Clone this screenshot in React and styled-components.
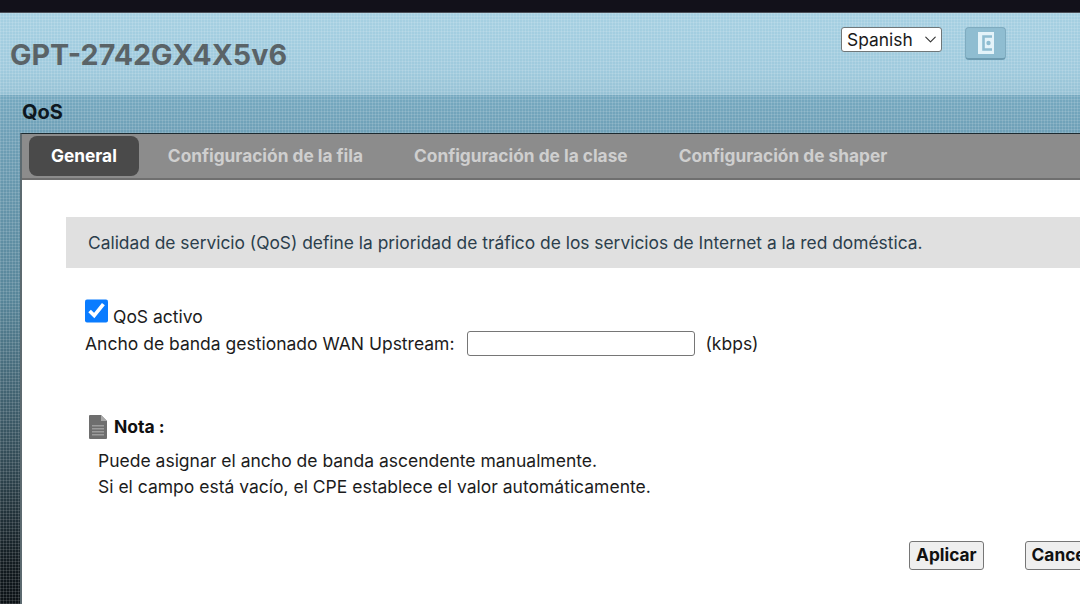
import React from "react";
import styled, { createGlobalStyle } from "styled-components";
import { ChevronDown } from "lucide-react";

const GlobalStyle = createGlobalStyle`
  html, body {
    margin: 0;
    padding: 0;
    background: #0b1115;
  }
  body {
    font-family: Inter, "Noto Sans", sans-serif;
  }
`;

function ExitIcon() {
  return (
    <svg width="16" height="22" viewBox="0 0 16 22">
      <path d="M0 0h16v22H0z" fill="#e4f3f9" />
      <path d="M14 4.5H5.5v13H14" fill="none" stroke="#8fbdd1" strokeWidth="2.6" />
      <circle cx="10.5" cy="11" r="2.2" fill="#8fbdd1" />
    </svg>
  );
}

function NoteIcon() {
  return (
    <svg width="18" height="24" viewBox="0 0 18 24">
      <path d="M1 0h11l6 6v17a1 1 0 0 1-1 1H1a1 1 0 0 1-1-1V1a1 1 0 0 1 1-1z" fill="#6e6e6e" />
      <path d="M12 0l6 6h-6z" fill="#a8a8a8" />
      <path d="M3 10h12v1.4H3zM3 13h12v1.4H3zM3 16h12v1.4H3zM3 19h12v1.4H3z" fill="#9c9c9c" />
    </svg>
  );
}

export default function App() {
  return (
    <>
      <GlobalStyle />
      <Page>
        <TopBar />
        <Header>
          <Title>GPT-2742GX4X5v6</Title>
          <HeaderTools>
            <SelectWrap>
              <LangSelect defaultValue="es">
                <option value="es">Spanish</option>
              </LangSelect>
              <SelectArrow>
                <ChevronDown size={19} strokeWidth={1.4} />
              </SelectArrow>
            </SelectWrap>
            <ExitButton>
              <ExitIcon />
            </ExitButton>
          </HeaderTools>
        </Header>
        <Section>
          <Heading>QoS</Heading>
          <Panel>
            <TabBar>
              <Tab $active>General</Tab>
              <Tab>Configuración de la fila</Tab>
              <Tab>Configuración de la clase</Tab>
              <Tab>Configuración de shaper</Tab>
            </TabBar>
            <Body>
              <InfoBox>
                Calidad de servicio (QoS) define la prioridad de tráfico de los servicios de Internet a la red doméstica.
              </InfoBox>
              <Form>
                <CheckRow>
                  <Check type="checkbox" defaultChecked />
                  <CheckLabel>QoS activo</CheckLabel>
                </CheckRow>
                <FieldRow>
                  <span>Ancho de banda gestionado WAN Upstream:</span>
                  <Field type="text" />
                  <span>(kbps)</span>
                </FieldRow>
              </Form>
              <Note>
                <NoteHead>
                  <NoteIcon />
                  <NoteTitle>Nota :</NoteTitle>
                </NoteHead>
                <NoteText>
                  Puede asignar el ancho de banda ascendente manualmente.
                  <br />
                  Si el campo está vacío, el CPE establece el valor automáticamente.
                </NoteText>
              </Note>
              <Actions>
                <ActionButton>Aplicar</ActionButton>
                <ActionButton>Cancelar</ActionButton>
              </Actions>
            </Body>
          </Panel>
        </Section>
      </Page>
    </>
  );
}

const dots = `
  repeating-linear-gradient(90deg, rgba(255,255,255,0.12) 0 1px, transparent 1px 3px),
  repeating-linear-gradient(0deg, rgba(255,255,255,0.12) 0 1px, transparent 1px 3px)
`;

const Page = styled.div`
  width: 1080px;
  height: 604px;
  overflow: hidden;
`;
const TopBar = styled.div`
  height: 13px;
  background: #12111a;
  border-bottom: 1px solid #4a4f58;
  box-sizing: border-box;
`;
const Header = styled.header`
  height: 82px;
  box-sizing: border-box;
  display: flex;
  justify-content: space-between;
  align-items: flex-start;
  padding: 14px 74px 0 10px;
  background: ${dots}, linear-gradient(180deg, #a6d0e2 0%, #9fcadd 70%, #97c2d5 100%);
`;
const Title = styled.h1`
  margin: 7px 0 0;
  font-size: 28.7px;
  line-height: 42px;
  font-weight: 700;
  color: #5a6367;
`;
const HeaderTools = styled.div`
  display: flex;
  align-items: flex-start;
  gap: 23px;
`;
const SelectWrap = styled.div`
  position: relative;
  width: 101px;
  height: 25px;
`;
const LangSelect = styled.select`
  appearance: none;
  width: 100%;
  height: 100%;
  box-sizing: border-box;
  padding: 0 0 1px 5px;
  background: #fff;
  border: 1px solid #6f7678;
  border-radius: 3px;
  color: #1a1a1a;
  font-family: inherit;
  font-size: 17.4px;
`;
const SelectArrow = styled.span`
  position: absolute;
  top: 3px;
  right: 2px;
  color: #333;
  pointer-events: none;
`;
const ExitButton = styled.button`
  width: 41px;
  height: 33px;
  display: flex;
  align-items: center;
  justify-content: center;
  padding: 0;
  border: 1px solid #7fabbf;
  border-bottom: 2px solid #6d9bb0;
  border-radius: 4px;
  background: #8fbdd1;
`;
const Section = styled.section`
  height: 509px;
  padding-left: 20px;
  background: ${dots}, linear-gradient(180deg, #76a9c0 0%, #6e9fb6 8%, #578599 40%, #324a55 72%, #121b20 92%, #0b1115 100%);
`;
const Heading = styled.h2`
  margin: 0;
  padding-left: 2px;
  height: 38px;
  font-size: 20px;
  line-height: 35px;
  font-weight: 700;
  color: #0e1820;
`;
const Panel = styled.div`
  width: 1100px;
  height: 480px;
  border-left: 2px solid #5c6a70;
  border-top: 1px solid #1c2a30;
  background: #fff;
`;
const TabBar = styled.div`
  height: 46px;
  box-sizing: border-box;
  display: flex;
  align-items: flex-start;
  gap: 7px;
  padding: 2px 0 0 7px;
  background: #8c8c8c;
  border-bottom: 2px solid #6f6f6f;
`;
const Tab = styled.div`
  height: 40px;
  padding: 0 22px 2px;
  box-sizing: border-box;
  display: flex;
  align-items: center;
  border-radius: 8px;
  font-size: 17.3px;
  font-weight: 700;
  color: ${(p) => (p.$active ? "#fff" : "#cfcfcf")};
  background: ${(p) => (p.$active ? "#4a4a4a" : "transparent")};
`;
const Body = styled.div`
  padding: 37px 0 0 44px;
  color: #1c1c1c;
  font-size: 17.5px;
`;
const InfoBox = styled.div`
  height: 51px;
  box-sizing: border-box;
  padding-left: 22px;
  display: flex;
  align-items: center;
  background: #e0e0e0;
  color: #2b3e4c;
  font-size: 17.37px;
`;
const Form = styled.div`
  padding: 31px 0 0 19px;
`;
const CheckRow = styled.label`
  display: flex;
  align-items: flex-end;
  gap: 5px;
  height: 24px;
`;
const CheckLabel = styled.span`
  line-height: 20px;
  margin-bottom: -4px;
`;
const Check = styled.input`
  width: 23px;
  height: 24px;
  margin: 0;
  accent-color: #0a7cff;
`;
const FieldRow = styled.div`
  display: flex;
  align-items: center;
  gap: 10px;
  height: 25px;
  margin-top: 8px;
`;
const Field = styled.input`
  width: 228px;
  height: 25px;
  margin-left: 3px;
  box-sizing: border-box;
  border: 1px solid #767676;
  border-radius: 3px;
  background: #fff;
`;
const Note = styled.div`
  padding: 59px 0 0 23px;
`;
const NoteHead = styled.div`
  display: flex;
  align-items: center;
  gap: 7px;
`;
const NoteTitle = styled.span`
  padding-bottom: 2px;
  font-weight: 700;
  color: #111;
`;
const NoteText = styled.p`
  margin: 9px 0 0 9px;
  line-height: 26px;
`;
const Actions = styled.div`
  display: flex;
  gap: 41px;
  padding: 41px 0 0 843px;
`;
const ActionButton = styled.button`
  height: 29px;
  padding: 0 6px 2px;
  box-sizing: border-box;
  border: 1px solid #767676;
  border-radius: 3px;
  background: #efefef;
  color: #111;
  font-family: inherit;
  font-size: 17.3px;
  font-weight: 700;
  white-space: nowrap;
`;
